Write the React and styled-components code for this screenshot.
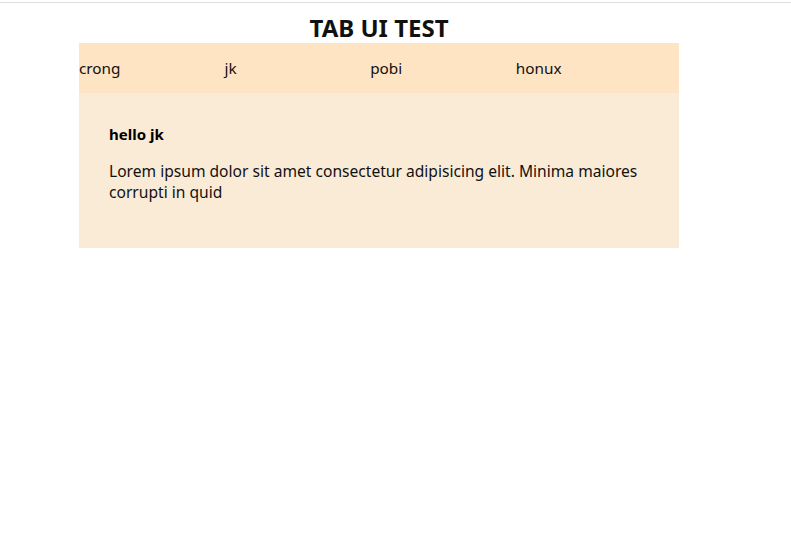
import React, { useState } from 'react';
import styled, { createGlobalStyle } from 'styled-components';

const GlobalStyle = createGlobalStyle`
  body {
    margin: 0;
    font-family: "Noto Sans", "Noto Sans CJK KR", sans-serif;
    color: #000;
    background: #fff;
  }
`;

const tabs = [
  { name: 'crong', text: 'Lorem ipsum dolor sit amet consectetur adipisicing elit. Minima maiores corrupti in quid' },
  { name: 'jk', text: 'Lorem ipsum dolor sit amet consectetur adipisicing elit. Minima maiores corrupti in quid' },
  { name: 'pobi', text: 'Lorem ipsum dolor sit amet consectetur adipisicing elit. Minima maiores corrupti in quid' },
  { name: 'honux', text: 'Lorem ipsum dolor sit amet consectetur adipisicing elit. Minima maiores corrupti in quid' },
];

function App() {
  const [active, setActive] = useState('jk');
  const current = tabs.find((t) => t.name === active);

  return (
    <>
      <GlobalStyle />
      <TopLine />
      <Wrapper>
        <Title>TAB UI TEST</Title>
        <TabBar>
          {tabs.map((t) => (
            <Tab key={t.name} onClick={() => setActive(t.name)}>
              {t.name}
            </Tab>
          ))}
        </TabBar>
        <Content>
          <h3>hello {current.name}</h3>
          <p>{current.text}</p>
        </Content>
      </Wrapper>
    </>
  );
}

const TopLine = styled.div`
  height: 1px;
  margin-top: 2px;
  background: #dedede;
`;

const Wrapper = styled.div`
  width: 600px;
  margin-left: 79px;
`;

const Title = styled.h1`
  margin: 0;
  height: 40px;
  padding-top: 10px;
  box-sizing: border-box;
  text-align: center;
  font-size: 24px;
  font-weight: 700;
  line-height: 30px;
  color: #111;
`;

const TabBar = styled.div`
  display: flex;
  height: 50px;
  align-items: center;
  background: #ffe4c4;
`;

const Tab = styled.div`
  width: 145.6px;
  font-size: 15.3px;
  cursor: pointer;
  color: #111;
`;

const Content = styled.div`
  height: 155px;
  box-sizing: border-box;
  padding: 30px 40px 0 30px;
  background: #faebd7;

  h3 {
    margin: 0 0 16px;
    font-size: 15px;
    line-height: 22px;
    font-weight: 700;
  }

  p {
    margin: 0;
    font-size: 15.6px;
    line-height: 21px;
    color: #111;
  }
`;

export default App;
